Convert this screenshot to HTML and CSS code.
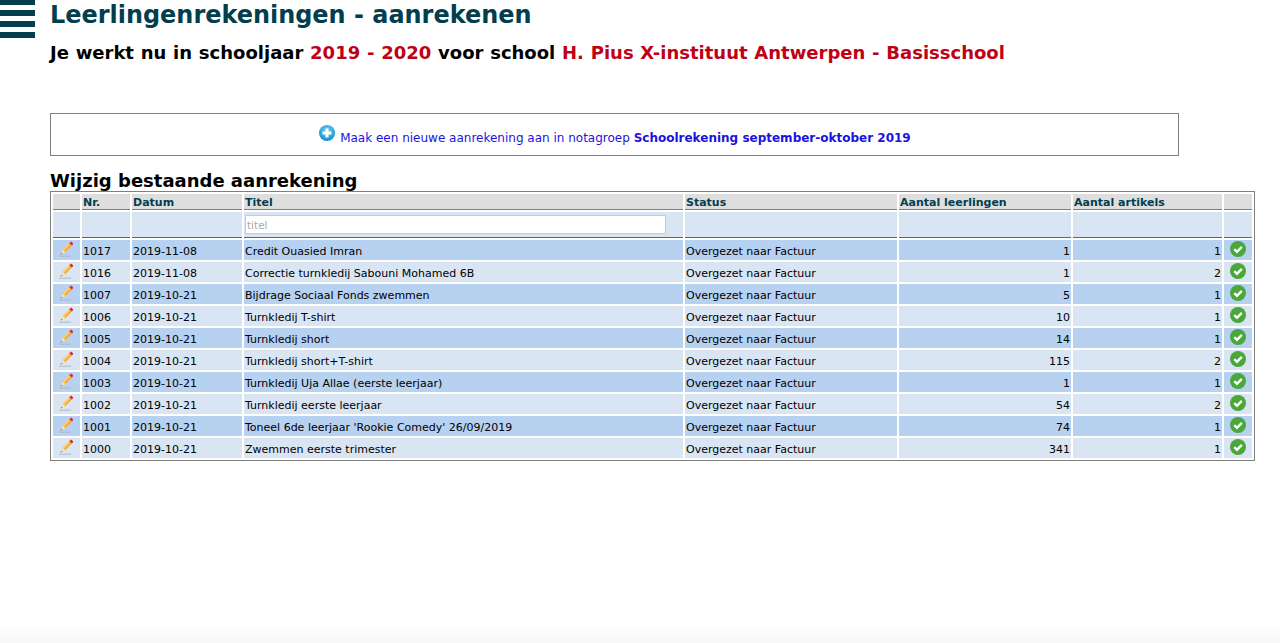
FILE: index.html
```html
<!DOCTYPE html>
<html lang="nl">
<head>
<meta charset="utf-8">
<title>Leerlingenrekeningen - aanrekenen</title>
<link rel="stylesheet" href="styles.css">
</head>
<body>
<div class="menu"><span></span><span></span><span></span><span></span></div>
<main class="page">
  <h1 class="title">Leerlingenrekeningen - aanrekenen</h1>
  <h2 class="sub">Je werkt nu in schooljaar <em>2019 - 2020</em> voor school <em>H. Pius X-instituut Antwerpen - Basisschool</em></h2>
  <div class="newbox">
    <svg class="plus" viewBox="0 0 16 16" width="16" height="16"><defs><radialGradient id="pg" cx="50%" cy="35%" r="65%"><stop offset="0" stop-color="#6fd3f5"/><stop offset="1" stop-color="#0f8fcb"/></radialGradient></defs><circle cx="8" cy="8" r="8" fill="url(#pg)"/><path d="M6.5 3.5h3v3h3v3h-3v3h-3v-3h-3v-3h3z" fill="#fff"/></svg>
    <a class="newlink" href="#">Maak een nieuwe aanrekening aan in notagroep <b>Schoolrekening september-oktober 2019</b></a>
  </div>
  <h3 class="section">Wijzig bestaande aanrekening</h3>
  <table class="grid">
    <colgroup><col class="c1"><col class="c2"><col class="c3"><col class="c4"><col class="c5"><col class="c6"><col class="c7"><col class="c8"></colgroup>
    <thead>
      <tr class="head"><th></th><th>Nr.</th><th>Datum</th><th>Titel</th><th>Status</th><th>Aantal leerlingen</th><th>Aantal artikels</th><th></th></tr>
      <tr class="filter"><td></td><td></td><td></td><td><input class="search" type="text" placeholder="titel"></td><td></td><td></td><td></td><td></td></tr>
    </thead>
    <tbody id="rows">
      <tr><td class="ic"><svg class="pen" viewBox="0 0 16 16"><use href="#pencil"/></svg></td><td>1017</td><td>2019-11-08</td><td>Credit Ouasied Imran</td><td>Overgezet naar Factuur</td><td class="n">1</td><td class="n">1</td><td class="ic"><svg class="ok" viewBox="0 0 16 16"><use href="#check"/></svg></td></tr>
      <tr><td class="ic"><svg class="pen" viewBox="0 0 16 16"><use href="#pencil"/></svg></td><td>1016</td><td>2019-11-08</td><td>Correctie turnkledij Sabouni Mohamed 6B</td><td>Overgezet naar Factuur</td><td class="n">1</td><td class="n">2</td><td class="ic"><svg class="ok" viewBox="0 0 16 16"><use href="#check"/></svg></td></tr>
      <tr><td class="ic"><svg class="pen" viewBox="0 0 16 16"><use href="#pencil"/></svg></td><td>1007</td><td>2019-10-21</td><td>Bijdrage Sociaal Fonds zwemmen</td><td>Overgezet naar Factuur</td><td class="n">5</td><td class="n">1</td><td class="ic"><svg class="ok" viewBox="0 0 16 16"><use href="#check"/></svg></td></tr>
      <tr><td class="ic"><svg class="pen" viewBox="0 0 16 16"><use href="#pencil"/></svg></td><td>1006</td><td>2019-10-21</td><td>Turnkledij T-shirt</td><td>Overgezet naar Factuur</td><td class="n">10</td><td class="n">1</td><td class="ic"><svg class="ok" viewBox="0 0 16 16"><use href="#check"/></svg></td></tr>
      <tr><td class="ic"><svg class="pen" viewBox="0 0 16 16"><use href="#pencil"/></svg></td><td>1005</td><td>2019-10-21</td><td>Turnkledij short</td><td>Overgezet naar Factuur</td><td class="n">14</td><td class="n">1</td><td class="ic"><svg class="ok" viewBox="0 0 16 16"><use href="#check"/></svg></td></tr>
      <tr><td class="ic"><svg class="pen" viewBox="0 0 16 16"><use href="#pencil"/></svg></td><td>1004</td><td>2019-10-21</td><td>Turnkledij short+T-shirt</td><td>Overgezet naar Factuur</td><td class="n">115</td><td class="n">2</td><td class="ic"><svg class="ok" viewBox="0 0 16 16"><use href="#check"/></svg></td></tr>
      <tr><td class="ic"><svg class="pen" viewBox="0 0 16 16"><use href="#pencil"/></svg></td><td>1003</td><td>2019-10-21</td><td>Turnkledij Uja Allae (eerste leerjaar)</td><td>Overgezet naar Factuur</td><td class="n">1</td><td class="n">1</td><td class="ic"><svg class="ok" viewBox="0 0 16 16"><use href="#check"/></svg></td></tr>
      <tr><td class="ic"><svg class="pen" viewBox="0 0 16 16"><use href="#pencil"/></svg></td><td>1002</td><td>2019-10-21</td><td>Turnkledij eerste leerjaar</td><td>Overgezet naar Factuur</td><td class="n">54</td><td class="n">2</td><td class="ic"><svg class="ok" viewBox="0 0 16 16"><use href="#check"/></svg></td></tr>
      <tr><td class="ic"><svg class="pen" viewBox="0 0 16 16"><use href="#pencil"/></svg></td><td>1001</td><td>2019-10-21</td><td>Toneel 6de leerjaar 'Rookie Comedy' 26/09/2019</td><td>Overgezet naar Factuur</td><td class="n">74</td><td class="n">1</td><td class="ic"><svg class="ok" viewBox="0 0 16 16"><use href="#check"/></svg></td></tr>
      <tr><td class="ic"><svg class="pen" viewBox="0 0 16 16"><use href="#pencil"/></svg></td><td>1000</td><td>2019-10-21</td><td>Zwemmen eerste trimester</td><td>Overgezet naar Factuur</td><td class="n">341</td><td class="n">1</td><td class="ic"><svg class="ok" viewBox="0 0 16 16"><use href="#check"/></svg></td></tr>
    </tbody>
  </table>
</main>
<div class="fade"></div>
<svg class="defs" width="0" height="0" aria-hidden="true">
  <symbol id="pencil" viewBox="0 0 16 16">
    <path d="M1 15.2h12" stroke="#a9b4c2" stroke-width="1.2" opacity=".7"/>
    <path d="M5 8.6 11.4 2.2 13.8 4.6 7.4 11 3 13.2z" fill="#f2a93b"/>
    <path d="M5 8.6 11.4 2.2 12.4 3.2 6 9.6z" fill="#fbd476"/>
    <path d="M11.2 2.4 12.4.9a1 1 0 0 1 1.3 0l1.2 1.2a1 1 0 0 1 0 1.3L13.8 4.6z" fill="#d8333a"/>
    <path d="M5 8.6 7.4 11 2.4 13.6z" fill="#f5e2bd"/>
    <path d="M3.3 11.9 4.1 12.8 2.4 13.6z" fill="#444"/>
  </symbol>
  <symbol id="check" viewBox="0 0 16 16">
    <circle cx="8" cy="8" r="8" fill="#4aa83a"/>
    <path d="M4.3 8.2 7 10.8 11.8 5.8" fill="none" stroke="#fff" stroke-width="2.4"/>
  </symbol>
</svg>
</body>
</html>
```
FILE: styles.css
```css
html, body { margin: 0; padding: 0; background: #fff; }
body { font-family: "DejaVu Sans", Verdana, sans-serif; color: #000; height: 643px; overflow: hidden; position: relative; }
.menu { position: absolute; left: 0; top: 0; width: 35px; }
.menu span { display: block; height: 6px; margin-bottom: 5px; background: #033e4f; }
.menu span:first-child { height: 5px; }
.page { padding-left: 50px; }
.title { margin: 0; font-size: 23.95px; line-height: 30px; font-weight: bold; color: #033e4f; }
.sub { margin: 11px 0 0; font-size: 18px; line-height: 24px; font-weight: bold; word-spacing: 0.5px; }
.sub em { font-style: normal; color: #c00015; }
.newbox { box-sizing: border-box; width: 1129px; height: 43px; margin-top: 48px; border: 1px solid #808080; text-align: center; padding: 11px 0 0 2px; font-size: 12px; line-height: 16px; }
.plus { vertical-align: 1px; margin: 0 1px 0 -1px; }
.newlink { color: #1a13e0; text-decoration: none; }
.section { margin: 15px 0 0; font-size: 18px; line-height: 20px; font-weight: bold; }
.grid { box-sizing: border-box; width: 1205px; table-layout: fixed; border: 1px solid #808080; border-collapse: separate; border-spacing: 2px; font-size: 11px; margin: 0; }
.c1 { width: 27px; } .c2 { width: 48px; } .c3 { width: 110px; } .c4 { width: 439px; }
.c5 { width: 212px; } .c6 { width: 172px; } .c7 { width: 149px; } .c8 { width: 28px; }
.grid th, .grid td { padding: 0 1px; overflow: hidden; white-space: nowrap; }
.head th { box-sizing: border-box; height: 16px; line-height: 13px; padding-top: 2px; background: #dedede; border-bottom: 1px solid #808080; color: #033e4f; text-align: left; font-weight: bold; vertical-align: middle; }
.filter td { height: 25px; background: #d9e5f3; border-bottom: 1px solid #666; vertical-align: middle; }
.search { box-sizing: border-box; display: block; width: 421px; height: 19px; margin: 0; padding: 1px 1px 0; border: 1px solid #ccc; background: #fff; font: 10.5px "DejaVu Sans", Verdana, sans-serif; color: #000; }
.search::placeholder { color: #aaa; opacity: 1; }
.grid tbody td { height: 20px; line-height: 13px; padding-top: 2px; box-sizing: border-box; vertical-align: middle; }
tbody tr:nth-child(odd) td { background: #b7d1f0; }
tbody tr:nth-child(even) td { background: #d9e5f3; }
.n { text-align: right; }
.grid tbody .ic { text-align: center; padding: 0; }
.pen { display: block; width: 16px; height: 16px; margin: -2px 0 0 5px; }
.ok { display: block; width: 16px; height: 16px; margin: -3px 0 0 6px; }
.defs { position: absolute; }
.fade { position: absolute; left: 0; right: 0; bottom: 0; height: 20px; background: linear-gradient(to bottom, #fff, #f7f7f7); }
```
